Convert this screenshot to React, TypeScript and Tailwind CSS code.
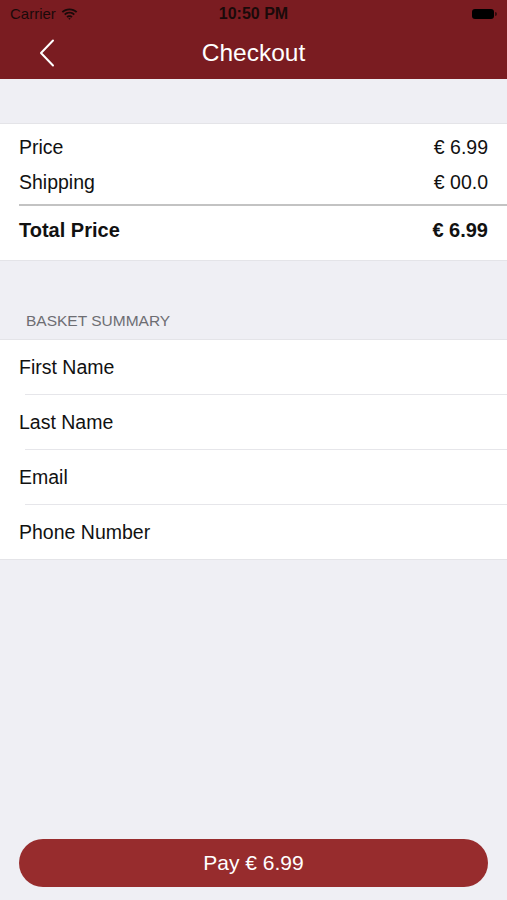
function StatusBar() {
  return (
    <div className="relative flex h-[28px] items-center px-[10px] text-[15px] text-[#1a0a0a]">
      <div className="flex items-center gap-[5px]">
        <span>Carrier</span>
        <svg width="17" height="12" viewBox="0 0 17 12" fill="#1a0a0a">
          <path d="M8.5 2.2c2.5 0 4.8 1 6.5 2.6l1.3-1.3C14.3 1.6 11.5.4 8.5.4S2.7 1.6.7 3.5L2 4.8C3.7 3.2 6 2.2 8.5 2.2z" />
          <path d="M8.5 5.6c1.6 0 3 .6 4.1 1.6l1.3-1.3C12.5 4.6 10.6 3.8 8.5 3.8S4.5 4.6 3.1 5.9l1.3 1.3c1.1-1 2.5-1.6 4.1-1.6z" />
          <path d="M8.5 9.1c.7 0 1.3.3 1.8.7l1.3-1.3C10.8 7.7 9.7 7.2 8.5 7.2s-2.3.5-3.1 1.3l1.3 1.3c.5-.4 1.1-.7 1.8-.7z" />
          <path d="M8.5 11.8l1.2-1.2c-.3-.3-.7-.5-1.2-.5s-.9.2-1.2.5z" />
        </svg>
      </div>
      <span className="absolute left-1/2 -translate-x-1/2 text-[16px] font-bold">10:50 PM</span>
      <div className="ml-auto flex items-center">
        <div className="h-[10px] w-[22px] rounded-[3px] bg-black" />
        <div className="ml-[1px] h-[4px] w-[2px] rounded-r bg-black/60" />
      </div>
    </div>
  );
}

function Row({ label, value, bold }: { label: string; value: string; bold?: boolean }) {
  return (
    <div
      className={`flex items-center justify-between ${bold ? 'h-[54px] pb-[6px] text-[20px] font-bold' : 'h-[35px]'}`}
    >
      <span>{label}</span>
      <span>{value}</span>
    </div>
  );
}

export default function App() {
  const fields = ['First Name', 'Last Name', 'Email', 'Phone Number'];
  return (
    <div
      className="flex h-[900px] w-full flex-col bg-[#efeff4] text-[19.5px] text-[#111]"
      style={{ fontFamily: '"Liberation Sans", Arial, sans-serif' }}
    >
      {/* Header */}
      <header className="bg-[#7a1c21] text-white">
        <StatusBar />
        <div className="relative flex h-[51px] items-center justify-center">
          <svg className="absolute left-[39px] top-[11px]" width="16" height="28" viewBox="0 0 16 28" fill="none">
            <path d="M14 1.5 2 14l12 12.5" stroke="white" strokeWidth="2" strokeLinecap="round" strokeLinejoin="round" />
          </svg>
          <h1 className="text-[24.5px]">Checkout</h1>
        </div>
      </header>

      {/* Price card */}
      <section className="mt-[44px] border-y border-[#e4e4e8] bg-white pt-[6px]">
        <div className="px-[19px]">
          <Row label="Price" value="€ 6.99" />
          <Row label="Shipping" value="€ 00.0" />
        </div>
        <div className="ml-[19px] mt-[4px] h-[2px] bg-[#c3c3c3]" />
        <div className="px-[19px]">
          <Row label="Total Price" value="€ 6.99" bold />
        </div>
      </section>

      {/* Basket summary */}
      <div className="px-[26px] pb-[7px] pt-[48px] text-[15.5px] text-[#6d6d72]">BASKET SUMMARY</div>
      <section className="border-y border-[#e4e4e8] bg-white">
        {fields.map((f, i) => (
          <div key={f} className="pl-[19px]">
            <div className="flex h-[54px] items-center">{f}</div>
            {i < fields.length - 1 && <div className="ml-[6px] h-px bg-[#e6e6ea]" />}
          </div>
        ))}
      </section>

      {/* Pay button */}
      <div className="mt-auto px-[19px] pb-[13px]">
        <button className="h-[48px] w-full rounded-full bg-[#972c2d] text-[21px] text-white">
          Pay € 6.99
        </button>
      </div>
    </div>
  );
}
